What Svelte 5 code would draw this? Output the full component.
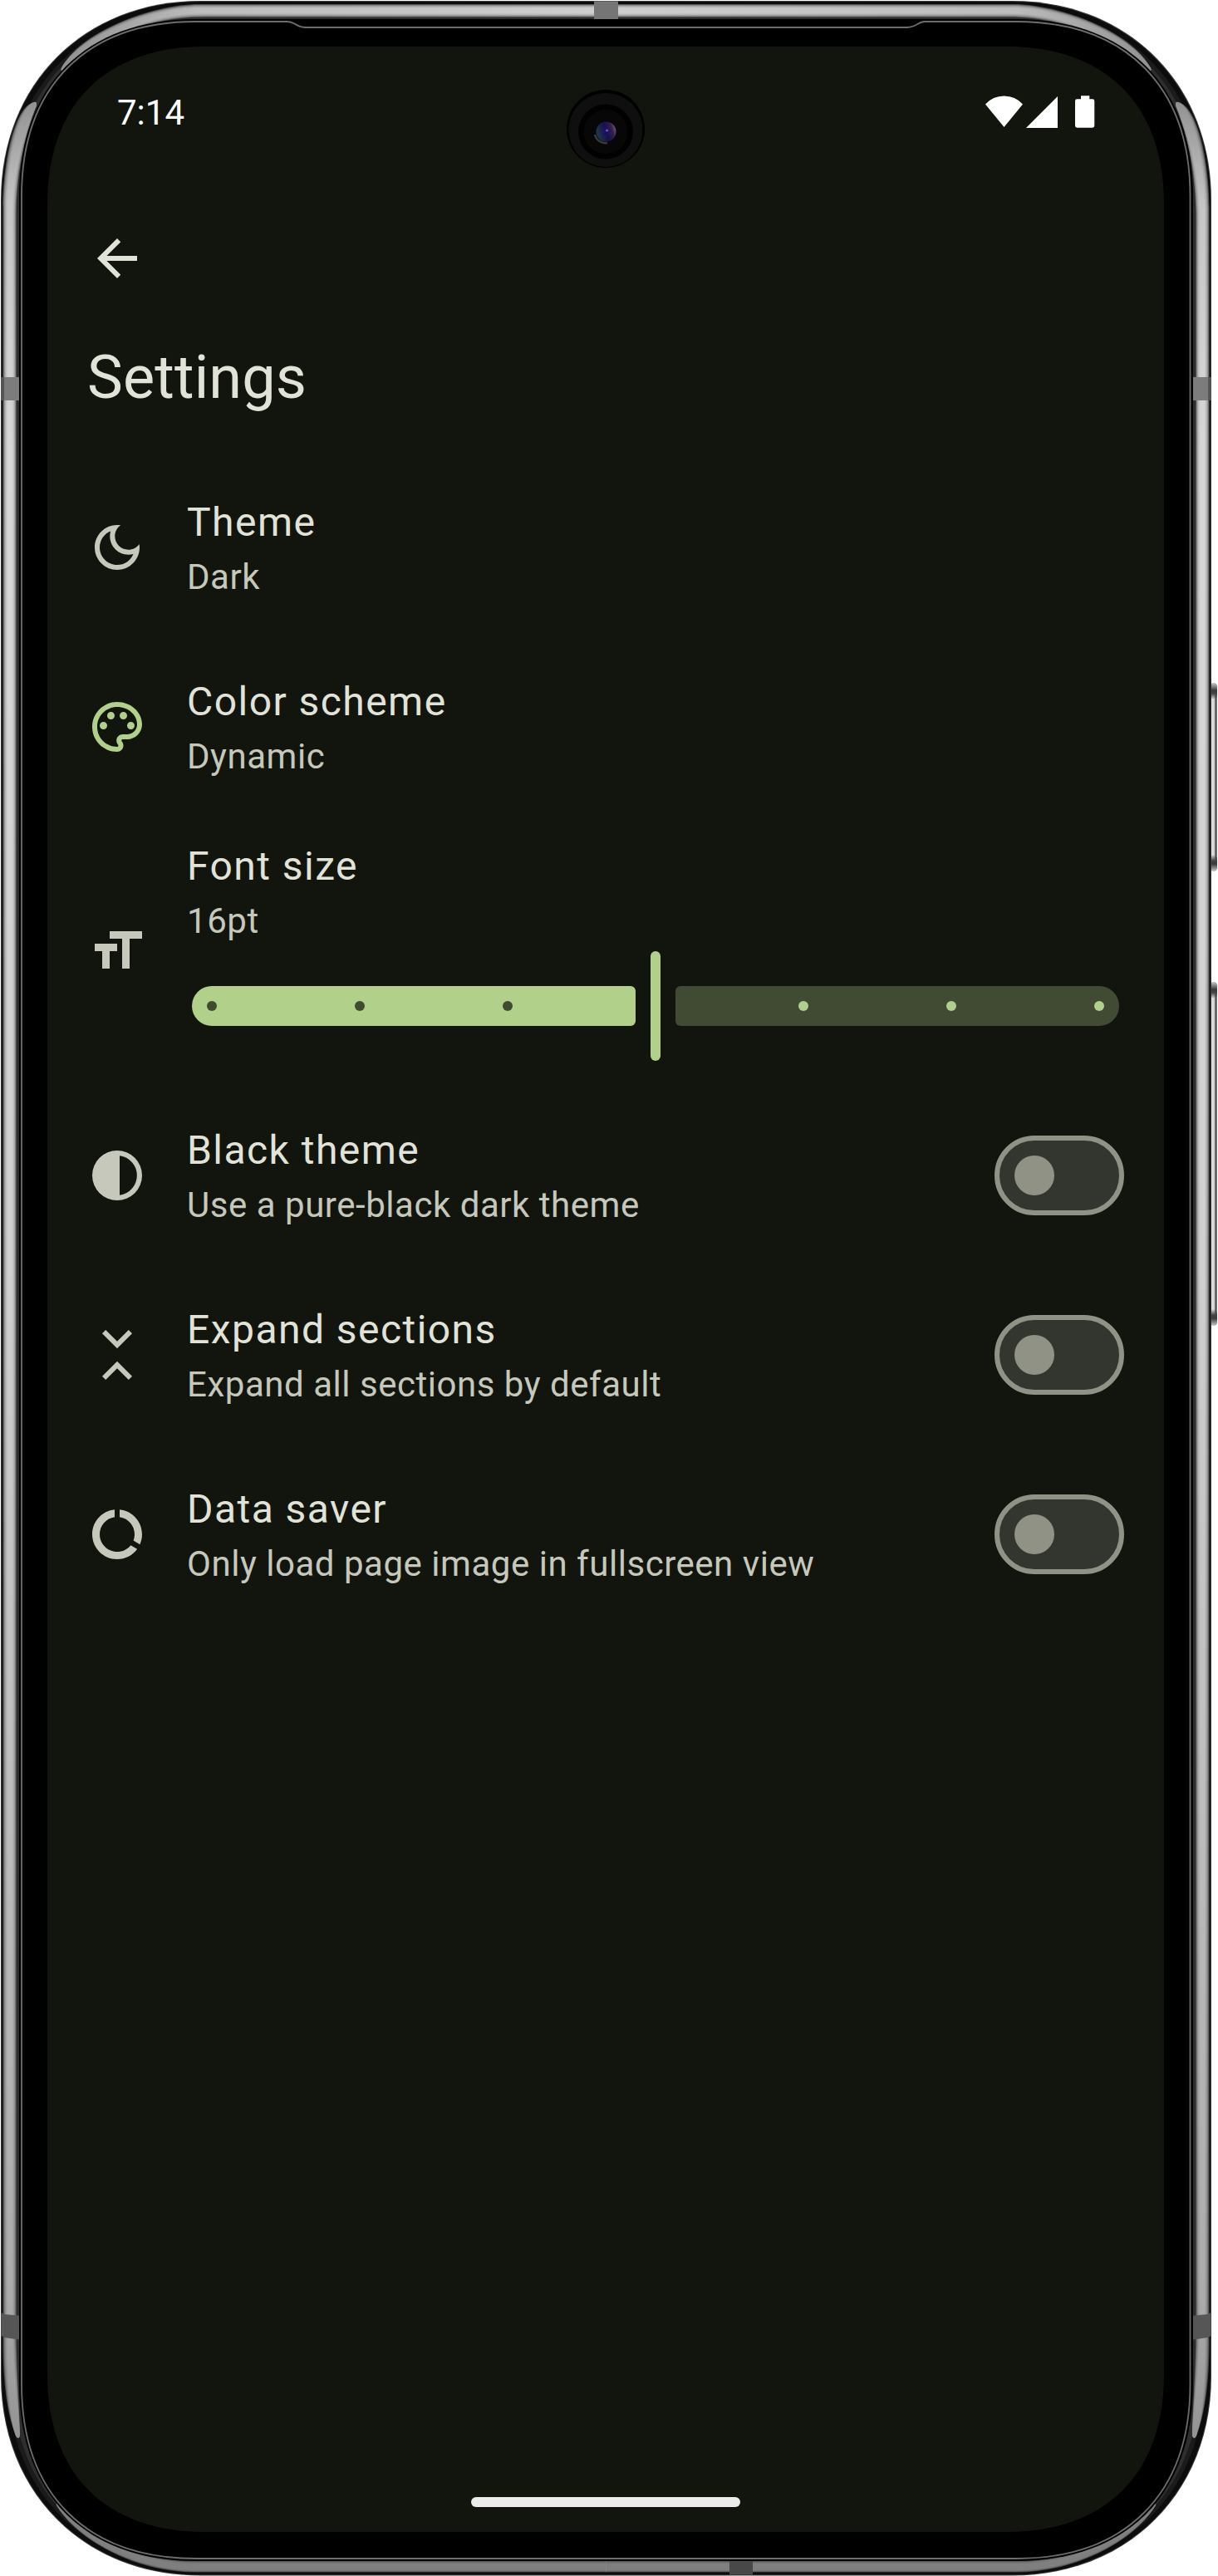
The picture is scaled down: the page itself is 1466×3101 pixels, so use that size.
<script>
  // Rounded body outline with continuous-curvature corners.
  function squircle(l, t, r, b, c, k) {
    const q = c * (1 - k);
    return `M${l} ${t + c}C${l} ${t + q} ${l + q} ${t} ${l + c} ${t}H${r - c}C${r - q} ${t} ${r} ${t + q} ${r} ${t + c}V${b - c}C${r} ${b - q} ${r - q} ${b} ${r - c} ${b}H${l + c}C${l + q} ${b} ${l} ${b - q} ${l} ${b - c}Z`;
  }

  // Metal reflections, drawn as nested translucent layers that narrow inward.
  const layers = [0, 0.2, 0.4, 0.6, 0.8, 1];
  const side = layers.map((s) => {
    const o = 3.5 + s * 5.5;
    const i = 19.5 - s * 5;
    return `M${o} 250C${o} 195 ${17 + s * 5} ${128 + s * 3} 41 123Q45 122 43.5 128C${32 - s * 2} 158 ${i} 205 ${i} 262V2800C${i} 2850 ${24 - s} 2905 24 2932Q22 2938 19 2932C${8 + s * 3} 2905 ${o} 2865 ${o} 2820Z`;
  });
  const top = layers.map((s) => {
    const o = 5 + s * 5;
    const i = 20.5 - s * 5;
    return `M730 ${o}H240C180 ${o} ${95 + s * 3} ${40 + s * 3} 74 82Q72 88 80 82C${125 - s * 3} ${48 - s} 175 ${i} 245 ${i}H730Z`;
  });
  const bottom = layers.map((s) => {
    const o = 3096.5 - s * 3;
    const i = 3083 + s * 4;
    return `M730 ${o}H235C165 ${o} 95 ${3060 - s * 3} 68 3016Q67 3010 74 3017C115 ${3060 + s * 2} 175 ${i} 235 ${i}H730Z`;
  });

  const icons = {
    moon: 'M9.37 5.51C9.19 6.15 9.1 6.82 9.1 7.5c0 4.08 3.32 7.4 7.4 7.4.68 0 1.35-.09 1.99-.27C17.45 17.19 14.93 19 12 19c-3.86 0-7-3.14-7-7 0-2.93 1.81-5.45 4.37-6.49zM12 3c-4.97 0-9 4.03-9 9s4.03 9 9 9 9-4.03 9-9c0-.46-.04-.92-.1-1.36-.98 1.37-2.58 2.26-4.4 2.26-2.98 0-5.4-2.42-5.4-5.4 0-1.81.89-3.42 2.26-4.4-.44-.06-.9-.1-1.36-.1z',
    palette: 'M12 22C6.49 22 2 17.51 2 12S6.49 2 12 2s10 4.04 10 9c0 3.31-2.69 6-6 6h-1.77c-.28 0-.5.22-.5.5 0 .12.05.23.13.33.41.47.64 1.06.64 1.67 0 1.38-1.12 2.5-2.5 2.5zm0-18c-4.41 0-8 3.59-8 8s3.59 8 8 8c.28 0 .5-.22.5-.5 0-.16-.08-.28-.14-.35-.41-.46-.63-1.05-.63-1.65 0-1.38 1.12-2.5 2.5-2.5H16c2.21 0 4-1.79 4-4 0-3.86-3.59-7-8-7zM5 11.5a1.5 1.5 0 1 0 3 0a1.5 1.5 0 1 0-3 0zM8 7.5a1.5 1.5 0 1 0 3 0a1.5 1.5 0 1 0-3 0zM13 7.5a1.5 1.5 0 1 0 3 0a1.5 1.5 0 1 0-3 0zM16 11.5a1.5 1.5 0 1 0 3 0a1.5 1.5 0 1 0-3 0z',
    size: 'M9 4v3h5v12h3V7h5V4H9zm-6 8h3v7h3v-7h3V9H3v3z',
    contrast: 'M12 2a10 10 0 1 0 0 20a10 10 0 1 0 0-20zM13 4.07A8 8 0 0 1 13 19.93z',
    unfold: 'M7.4 2L12 6.6L16.6 2L18 3.4L12 9.4L6 3.4zM12 14.6L18 20.6L16.6 22L12 17.4L7.4 22L6 20.6z',
    data: 'M13 2.05v3.03c3.39.49 6 3.39 6 6.92 0 .9-.18 1.75-.48 2.54l2.6 1.53c.56-1.24.88-2.62.88-4.07 0-5.18-3.95-9.45-9-9.95zM12 19c-3.87 0-7-3.13-7-7 0-3.53 2.61-6.43 6-6.92V2.05c-5.06.5-9 4.76-9 9.95 0 5.52 4.47 10 9.99 10 3.31 0 6.24-1.61 8.06-4.09l-2.6-1.53C16.17 17.98 14.21 19 12 19z'
  };

  let rows = $state([
    { icon: 'moon', title: 'Theme', sub: 'Dark' },
    { icon: 'palette', title: 'Color scheme', sub: 'Dynamic', accent: true },
    { icon: 'size', title: 'Font size', sub: '16pt', slider: true },
    { icon: 'contrast', title: 'Black theme', sub: 'Use a pure-black dark theme', on: false },
    { icon: 'unfold', title: 'Expand sections', sub: 'Expand all sections by default', on: false },
    { icon: 'data', title: 'Data saver', sub: 'Only load page image in fullscreen view', on: false }
  ]);
</script>

{#snippet reflections()}
  {#each side as d}<path {d} fill="url(#sideMetal)" opacity="0.38" />{/each}
  {#each top as d}<path {d} fill="url(#topMetal)" opacity="0.38" />{/each}
  {#each bottom as d}<path {d} fill="#828282" opacity="0.45" />{/each}
  <path d="M1 454H23V482H1z" fill="#7c7c7c" />
  <path d="M1 454H5V482H1z" fill="#555" />
  <path d="M1.500 2784L6 2786L23 2787.500V2816.500L6 2814L1.500 2812z" fill="#565656" />
{/snippet}

<main class="phone">
  <svg class="frame" viewBox="0 0 1466 3101" aria-hidden="true">
    <defs>
      <linearGradient id="sideMetal" gradientUnits="userSpaceOnUse" x1="0" y1="120" x2="0" y2="2935">
        <stop offset="0" stop-color="#989898" />
        <stop offset="0.045" stop-color="#d0d0d0" />
        <stop offset="0.15" stop-color="#e2e2e2" />
        <stop offset="0.5" stop-color="#dadada" />
        <stop offset="0.94" stop-color="#b4b4b4" />
        <stop offset="1" stop-color="#9a9a9a" />
      </linearGradient>
      <linearGradient id="topMetal" gradientUnits="userSpaceOnUse" x1="74" y1="0" x2="730" y2="0">
        <stop offset="0" stop-color="#989898" />
        <stop offset="0.25" stop-color="#c6c6c6" />
        <stop offset="1" stop-color="#dadada" />
      </linearGradient>
      <linearGradient id="button" x1="0" y1="0" x2="1" y2="0">
        <stop offset="0" stop-color="#aaa" />
        <stop offset="0.25" stop-color="#e0e0e0" />
        <stop offset="0.6" stop-color="#d4d4d4" />
        <stop offset="0.82" stop-color="#444" />
        <stop offset="1" stop-color="#999" />
      </linearGradient>
      <linearGradient id="cap" x1="0" y1="0" x2="0" y2="1">
        <stop offset="0" stop-color="#ccc" />
        <stop offset="0.45" stop-color="#3a3a3a" />
        <stop offset="0.65" stop-color="#444" />
        <stop offset="1" stop-color="#444" stop-opacity="0" />
      </linearGradient>
      <linearGradient id="lens" x1="0" y1="0.6" x2="1" y2="0.3">
        <stop offset="0" stop-color="#233b48" />
        <stop offset="0.5" stop-color="#15104e" />
        <stop offset="0.8" stop-color="#38204a" />
        <stop offset="1" stop-color="#7c5690" />
      </linearGradient>
    </defs>

    {#each [[822, 1049], [1182, 1596]] as [a, b]}
      <rect x="1456" y={a} width="9" height={b - a} rx="5" fill="url(#button)" />
      <rect x="1456" y={a} width="9" height="20" rx="5" fill="url(#cap)" />
      <rect x="1456" y={-b} width="9" height="20" rx="5" fill="url(#cap)" transform="scale(1 -1)" />
    {/each}

    <path d={squircle(1, 1, 1458, 3100.5, 240, 0.583)} fill="#3c3c3c" />
    <path d={squircle(2, 2, 1457, 3099.5, 239, 0.583)} fill="#0c0c0c" />
    <path d={squircle(9, 9, 1450, 3094, 232, 0.59)} fill="#1b1b1b" />
    <path d={squircle(15, 15, 1444, 3088, 226, 0.6)} fill="#2e2e2e" />
    {@render reflections()}
    <g transform="translate(1459 0) scale(-1 1)">{@render reflections()}</g>
    <path d="M715 1.500H744V23H715z" fill="#757575" />
    <path d="M878 3083H906V3099.500H878z" fill="#484848" />
    <path d={squircle(23, 23, 1436, 3083, 213, 0.625)} fill="#000" />
    <path
      d="M26 236C26 104 104 26 236 26H345C355 26 357 33 368 33H1092C1103 33 1105 26 1113 26H1223C1355 26 1432.500 104 1432.500 236V2870C1432.500 3002 1355 3080 1223 3080H236C104 3080 26 3002 26 2870Z"
      fill="#000"
      stroke="#6c6c6c"
      stroke-width="1.800"
    />
    <path d={squircle(57, 56, 1401, 3048, 190, 0.632)} fill="#12150e" />

    <circle cx="729" cy="155" r="47" fill="#000" />
    <circle cx="729" cy="156.500" r="44.500" fill="#0f0f0f" />
    <circle cx="729" cy="158.500" r="33" fill="#010101" />
    <circle cx="729" cy="158.500" r="26.500" fill="#070707" />
    <path d="M716 162A13 13 0 0 0 731 172" fill="none" stroke="#3a3a3a" stroke-width="2.500" />
    <circle cx="729.500" cy="158.500" r="12" fill="url(#lens)" />
    <circle cx="728.500" cy="159" r="4.500" fill="none" stroke="#22186e" stroke-width="1.200" />
    <circle cx="730.500" cy="157" r="1.600" fill="#6a4ce0" />
  </svg>

  <div class="screen">
    <header class="status">
      <span class="time">7:14</span>
      <svg class="signals" viewBox="0 0 132 40" aria-hidden="true">
        <path d="M0 10.500Q9 0.500 22.500 0.500T45 10.500L22.500 38z" />
        <path d="M87 1V39H49z" />
        <path d="M115 0.300h10.300V4.200h3.700q2.300 0 2.300 2.300V36.300q0 2.400-2.400 2.400H110.400q-2.400 0-2.400-2.400V6.500q0-2.300 2.300-2.300H115z" />
      </svg>
    </header>

    <button class="back" aria-label="Back">
      <svg viewBox="0 0 24 24"><path d="M20 11H7.830l5.590-5.590L12 4l-8 8 8 8 1.410-1.410L7.830 13H20v-2z" /></svg>
    </button>
    <h1>Settings</h1>

    <ul>
      {#each rows as row}
        <li class:with-slider={row.slider}>
          <svg class="icon" class:accent={row.accent} viewBox="0 0 24 24" aria-hidden="true">
            <path fill-rule="evenodd" d={icons[row.icon]} />
          </svg>
          <div class="body">
            <div class="title">{row.title}</div>
            <div class="sub">{row.sub}</div>
            {#if row.slider}
              <div class="slider">
                <div class="track active"><i></i><i></i><i></i></div>
                <div class="handle"></div>
                <div class="track rest"><i></i><i></i><i></i></div>
              </div>
            {/if}
          </div>
          {#if row.on !== undefined}
            <button class="switch" class:on={row.on} role="switch" aria-checked={row.on} aria-label={row.title} onclick={() => (row.on = !row.on)}>
              <span class="thumb"></span>
            </button>
          {/if}
        </li>
      {/each}
    </ul>
    <div class="home"></div>
  </div>
</main>

<style>
  :global(body) {
    background: #fff;
  }
  .phone {
    position: relative;
    box-sizing: border-box;
    width: 1466px;
    height: 3101px;
    padding: 56px 65px 53px 57px;
    overflow: hidden;
    font-family: Roboto, sans-serif;
    color: #e2e3d8;
  }
  .frame {
    position: absolute;
    inset: 0;
    width: 1466px;
    height: 3101px;
  }
  .screen {
    position: relative;
    display: flex;
    flex-direction: column;
    width: 1344px;
    height: 2992px;
  }
  button {
    padding: 0;
    border: 0;
    background: none;
    font: inherit;
  }
  .status {
    display: flex;
    justify-content: space-between;
    box-sizing: border-box;
    height: 219px;
    padding: 54px 83px 0 84px;
    color: #fff;
  }
  .time {
    padding-top: 1px;
    font-size: 42px;
    line-height: 50px;
  }
  .signals {
    width: 132px;
    height: 40px;
    margin-top: 5px;
    fill: #fff;
  }
  .back {
    width: 72px;
    height: 72px;
    margin-left: 48px;
  }
  .back svg {
    display: block;
    fill: #e2e3d8;
  }
  h1 {
    margin: 60px 48px 0;
    font-size: 72px;
    font-weight: 400;
    line-height: 96px;
    letter-spacing: 0.15px;
  }
  ul {
    display: flex;
    flex-direction: column;
    margin: 48px 0 0;
    padding: 0;
    list-style: none;
  }
  li {
    display: flex;
    align-items: center;
    gap: 48px;
    box-sizing: border-box;
    height: 216px;
    padding: 0 48px;
  }
  li.with-slider {
    height: 324px;
  }
  .icon {
    flex: none;
    width: 72px;
    height: 72px;
    fill: #c5c8ba;
  }
  .icon.accent {
    fill: #b1d18a;
  }
  .body {
    flex: 1;
    white-space: nowrap;
  }
  .title {
    font-size: 48px;
    line-height: 72px;
    letter-spacing: 1.45px;
  }
  .sub {
    color: #c5c8ba;
    font-size: 42px;
    line-height: 60px;
    letter-spacing: 0.53px;
  }
  .slider {
    display: flex;
    align-items: center;
    gap: 18px;
    height: 144px;
    margin: 0 6px;
  }
  .track {
    display: flex;
    flex: 1;
    align-items: center;
    gap: 166px;
    box-sizing: border-box;
    height: 48px;
    padding: 0 18px;
  }
  .track i {
    width: 12px;
    height: 12px;
    border-radius: 50%;
  }
  .active {
    border-radius: 24px 6px 6px 24px;
    background: #b1d18a;
  }
  .active i {
    background: #414a32;
  }
  .rest {
    justify-content: flex-end;
    border-radius: 6px 24px 24px 6px;
    background: #414a32;
  }
  .rest i {
    background: #b1d18a;
  }
  .handle {
    width: 12px;
    height: 132px;
    border-radius: 6px;
    background: #b1d18a;
  }
  .switch {
    display: flex;
    align-items: center;
    box-sizing: border-box;
    width: 156px;
    height: 96px;
    padding: 0 18px;
    border: 6px solid #8f9285;
    border-radius: 48px;
    background: #33362e;
  }
  .switch.on {
    justify-content: flex-end;
    background: #b1d18a;
  }
  .thumb {
    width: 48px;
    height: 48px;
    border-radius: 50%;
    background: #8f9285;
  }
  .home {
    align-self: center;
    width: 324px;
    height: 12px;
    margin-top: auto;
    margin-bottom: 30px;
    border-radius: 6px;
    background: #ececec;
  }
</style>
